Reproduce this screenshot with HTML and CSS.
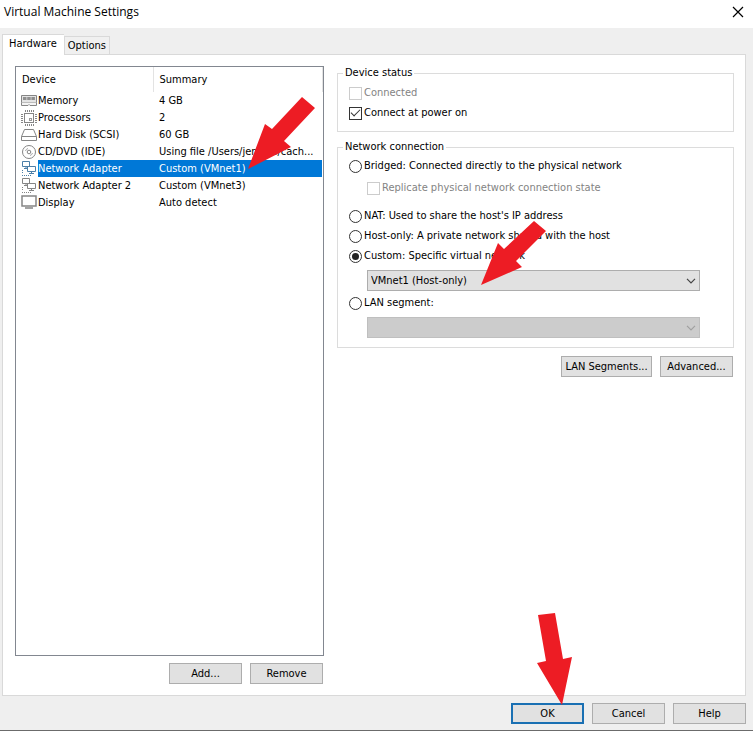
FILE: index.html
```html
<!DOCTYPE html>
<html lang="en">
<head>
<meta charset="utf-8">
<title>Virtual Machine Settings</title>
<link rel="stylesheet" href="styles.css">
</head>
<body>
<div class="window">
  <header class="titlebar">
    <h1>Virtual Machine Settings</h1>
    <button class="close" type="button" aria-label="Close">
      <svg width="12" height="12" viewBox="0 0 12 12"><path d="M1 1 11 11M11 1 1 11" fill="none" stroke="#000" stroke-width="1.2"/></svg>
    </button>
  </header>

  <main class="body">
    <div class="tabs" role="tablist">
      <button class="tab active" type="button" role="tab" aria-selected="true">Hardware</button>
      <button class="tab" type="button" role="tab" aria-selected="false">Options</button>
    </div>

    <div class="panel">
      <section class="left">
        <div class="list">
          <table>
            <thead>
              <tr><th class="device">Device</th><th class="summary">Summary</th></tr>
            </thead>
            <tbody>
              <tr>
                <td><span class="item"><svg class="icon" width="17" height="16" viewBox="0 0 17 16"><path d="M.5 2.500h15v7H.5z" fill="#e4e4e4" stroke="#858585"/><path d="M2 5.500h12" stroke="#8f8f8f" stroke-width="3" stroke-dasharray="3.500 .7"/><path d="M.5 9.500v3h6.500l1-1 1 1h6.500v-3" fill="#f4f4f4" stroke="#858585"/></svg><span class="name">Memory</span></span></td>
                <td class="value">4 GB</td>
              </tr>
              <tr>
                <td><span class="item"><svg class="icon" width="17" height="16" viewBox="0 0 17 16"><rect x="3.500" y="3.500" width="9" height="9" fill="#fff" stroke="#858585"/><path d="M4 1h9M4 15h9M1 4v9M15 4v9" fill="none" stroke="#858585" stroke-width="2" stroke-dasharray="1 1"/><rect x="8.500" y="8.500" width="2" height="2" fill="none" stroke="#999"/></svg><span class="name">Processors</span></span></td>
                <td class="value">2</td>
              </tr>
              <tr>
                <td><span class="item"><svg class="icon" width="17" height="16" viewBox="0 0 17 16"><path d="M3.500 2.500h9l3 7v4H.5v-4zM.5 9.500h15" fill="#fff" stroke="#858585"/></svg><span class="name">Hard Disk (SCSI)</span></span></td>
                <td class="value">60 GB</td>
              </tr>
              <tr>
                <td><span class="item"><svg class="icon" width="17" height="16" viewBox="0 0 17 16"><circle cx="8" cy="8" r="6.500" fill="#fff" stroke="#858585"/><circle cx="8" cy="8" r="1.800" fill="none" stroke="#858585"/><path d="M4.500 7a3.500 3.500 0 0 1 2.500-2.500M11.500 9a3.500 3.500 0 0 1-2.500 2.500" fill="none" stroke="#a5a5a5"/></svg><span class="name">CD/DVD (IDE)</span></span></td>
                <td class="value">Using file /Users/jenkins/cach...</td>
              </tr>
              <tr class="selected">
                <td><span class="item"><svg class="icon net" width="17" height="16" viewBox="0 0 17 16"><path d="M1.500.5h7v5h-7zM3 7.500h4M5 6v1M6.500 5.500h8v5h-8zM8 12.500h5M10.500 11v1" fill="#fff" stroke="currentColor"/><path d="M1.500 9v4M1 14.500h9" fill="none" stroke="currentColor" stroke-dasharray="1 1"/></svg><span class="name">Network Adapter</span></span></td>
                <td class="value">Custom (VMnet1)</td>
              </tr>
              <tr>
                <td><span class="item"><svg class="icon net" width="17" height="16" viewBox="0 0 17 16"><path d="M1.500.5h7v5h-7zM3 7.500h4M5 6v1M6.500 5.500h8v5h-8zM8 12.500h5M10.500 11v1" fill="#fff" stroke="currentColor"/><path d="M1.500 9v4M1 14.500h9" fill="none" stroke="currentColor" stroke-dasharray="1 1"/></svg><span class="name">Network Adapter 2</span></span></td>
                <td class="value">Custom (VMnet3)</td>
              </tr>
              <tr>
                <td><span class="item"><svg class="icon" width="17" height="16" viewBox="0 0 17 16"><path d="M1 1h14v10H1z" fill="#fff" stroke="#858585" stroke-width="1.500"/><path d="M4 13h8" stroke="#858585" stroke-width="1.500"/></svg><span class="name">Display</span></span></td>
                <td class="value">Auto detect</td>
              </tr>
            </tbody>
          </table>
        </div>
        <div class="actions">
          <button class="btn" type="button">Add...</button>
          <button class="btn" type="button">Remove</button>
        </div>
      </section>

      <section class="right">
        <fieldset class="status">
          <legend>Device status</legend>
          <label class="choice disabled"><input type="checkbox" disabled>Connected</label>
          <label class="choice"><input type="checkbox" checked>Connect at power on</label>
        </fieldset>

        <fieldset class="network">
          <legend>Network connection</legend>
          <label class="choice"><input type="radio" name="net">Bridged: Connected directly to the physical network</label>
          <label class="choice nested disabled"><input type="checkbox" disabled>Replicate physical network connection state</label>
          <label class="choice"><input type="radio" name="net">NAT: Used to share the host's IP address</label>
          <label class="choice"><input type="radio" name="net">Host-only: A private network shared with the host</label>
          <label class="choice"><input type="radio" name="net" checked>Custom: Specific virtual network</label>
          <div class="combo">
            <select aria-label="Virtual network"><option>VMnet1 (Host-only)</option></select>
            <svg width="10" height="6" viewBox="0 0 10 6"><path d="M1 .8 5 4.800 9 .8" fill="none" stroke="#444" stroke-width="1.200"/></svg>
          </div>
          <label class="choice"><input type="radio" name="net">LAN segment:</label>
          <div class="combo off">
            <select aria-label="LAN segment" disabled><option></option></select>
            <svg width="10" height="6" viewBox="0 0 10 6"><path d="M1 .8 5 4.800 9 .8" fill="none" stroke="#a0a0a0" stroke-width="1.200"/></svg>
          </div>
        </fieldset>

        <div class="actions">
          <button class="btn wide" type="button">LAN Segments...</button>
          <button class="btn" type="button">Advanced...</button>
        </div>
      </section>
    </div>
  </main>

  <footer class="footer">
    <button class="btn default" type="button">OK</button>
    <button class="btn" type="button">Cancel</button>
    <button class="btn" type="button">Help</button>
  </footer>

  <svg class="arrow to-adapter" width="68" height="73" viewBox="248 97 68 73"><path d="M248 169 265 124 272 129 302 97 315 108 284 141 291 147z" fill="#ed1c24"/></svg>
  <svg class="arrow to-network" width="66" height="65" viewBox="481 221 66 65"><path d="M481 285 498 243 504 249 534 221 546 231 516 261 522 267z" fill="#ed1c24"/></svg>
  <svg class="arrow to-ok" width="36" height="93" viewBox="537 612 36 93"><path d="M562 705 537 663 546 661 538 615 555 613 563 659 572 657z" fill="#ed1c24"/></svg>
</div>
</body>
</html>
```
FILE: styles.css
```css
* { box-sizing: border-box; }

body {
  margin: 0;
  background: #efefef;
  color: #000;
  font: 11px/14px "DejaVu Sans Condensed", "Noto Sans", sans-serif;
}

button, select, input { font: inherit; color: inherit; }

.window {
  position: relative;
  display: flex;
  flex-direction: column;
  min-height: 100vh;
  border-bottom: 1px solid #6b6b6b;
}

.titlebar {
  display: flex;
  align-items: center;
  justify-content: space-between;
  height: 28px;
  padding: 0 9px 4px 4px;
  background: #fff;
}

.titlebar h1 {
  margin: 0;
  font: 12px/16px "Open Sans", sans-serif;
}

.close {
  display: flex;
  padding: 0;
  border: 0;
  background: none;
}

.body {
  flex: 1;
  display: flex;
  flex-direction: column;
  padding: 6px 7px 0 2px;
}

.tabs {
  display: flex;
  align-items: flex-end;
  height: 20px;
}

.tab {
  height: 18px;
  padding: 0 3px;
  border: 1px solid #d9d9d9;
  border-bottom: 0;
  background: #f0f0f0;
}

.tab.active {
  position: relative;
  height: 21px;
  margin-bottom: -1px;
  padding: 0 7px 2px 6px;
  border-right: 0;
  background: #fff;
}

.panel {
  flex: 1;
  display: flex;
  gap: 13px;
  padding: 11px 11px 11px 12px;
  border: 1px solid #d9d9d9;
  background: #fff;
}

.left {
  flex: 309 1 0;
  display: flex;
  flex-direction: column;
  gap: 7px;
}

.right {
  flex: 397 1 0;
  min-width: 0;
}

.list {
  flex: 1;
  border: 1px solid #828790;
}

table {
  width: 100%;
  border-collapse: collapse;
  table-layout: fixed;
}

th, td {
  padding: 0;
  text-align: left;
  font-weight: normal;
  white-space: nowrap;
}

th { height: 25px; }

.device {
  width: 137px;
  padding-left: 6px;
  border-right: 1px solid #e3e3e3;
}

.summary {
  padding-left: 6px;
  border-right: 1px solid #e3e3e3;
}

.item {
  display: flex;
  align-items: center;
  height: 17px;
  padding-left: 5px;
}

.icon { flex: none; }

.net { color: #858585; }

.name {
  flex: 1;
  line-height: 17px;
}

.value {
  padding-left: 6px;
  border-right: 1px solid #fff;
}

.selected .name, .selected .value {
  background: #0078d7;
  color: #fff;
}

.selected .net { color: #4c7fa8; }

.actions {
  display: flex;
  justify-content: flex-end;
  gap: 8px;
  padding-right: 1px;
}

.btn {
  width: 73px;
  height: 21px;
  padding: 0;
  border: 1px solid #adadad;
  background: #e1e1e1;
  white-space: nowrap;
}

.btn.wide { width: 91px; }

.btn.default { border: 2px solid #1a70b3; }

fieldset {
  min-width: 0;
  margin: 0;
  padding: 0 0 0 11px;
  border: 1px solid #dcdcdc;
}

legend {
  margin-left: -6px;
  padding: 0 2px;
}

.status { padding-bottom: 8px; }

.network {
  margin-top: 8px;
  padding-top: 2px;
  padding-right: 33px;
  padding-bottom: 9px;
}

.choice {
  display: flex;
  align-items: center;
  gap: 2px;
  height: 20px;
  white-space: nowrap;
}

.status .choice:first-of-type { margin-top: 3px; }

.disabled { color: #838383; }

.nested {
  margin: 2px 0 8px 18px;
}

input {
  appearance: none;
  flex: none;
  display: grid;
  place-items: center;
  width: 13px;
  height: 13px;
  margin: 0;
  border: 1px solid #333;
  background: #fff;
}

input[type="radio"] { border-radius: 50%; }

input:disabled { border-color: #ccc; }

input[type="radio"]:checked::after {
  content: "";
  width: 7px;
  height: 7px;
  border-radius: 50%;
  background: #222;
}

input[type="checkbox"]:checked::after {
  content: "";
  width: 8px;
  height: 4px;
  margin-bottom: 3px;
  border: solid #333;
  border-width: 0 0 1px 1px;
  transform: rotate(-45deg);
}

.combo {
  display: grid;
  align-items: center;
  margin: 4px 0 2px 18px;
}

.combo > * { grid-area: 1 / 1; }

.combo svg {
  justify-self: end;
  margin-right: 4px;
  pointer-events: none;
}

select {
  appearance: none;
  width: 100%;
  height: 21px;
  padding: 0 3px;
  border: 1px solid #adadad;
  border-radius: 0;
  background: #e1e1e1;
}

.off { margin-bottom: 0; }

.off select {
  border-color: #bfbfbf;
  background: #ccc;
  opacity: 1;
}

.right .actions { margin-top: 8px; }

.footer {
  display: flex;
  justify-content: flex-end;
  gap: 8px;
  padding: 7px 7px 6px;
}

.arrow {
  position: absolute;
  pointer-events: none;
}

.to-adapter { left: 248px; top: 97px; }
.to-network { left: 481px; top: 221px; }
.to-ok { right: 180px; bottom: 25px; }
```
